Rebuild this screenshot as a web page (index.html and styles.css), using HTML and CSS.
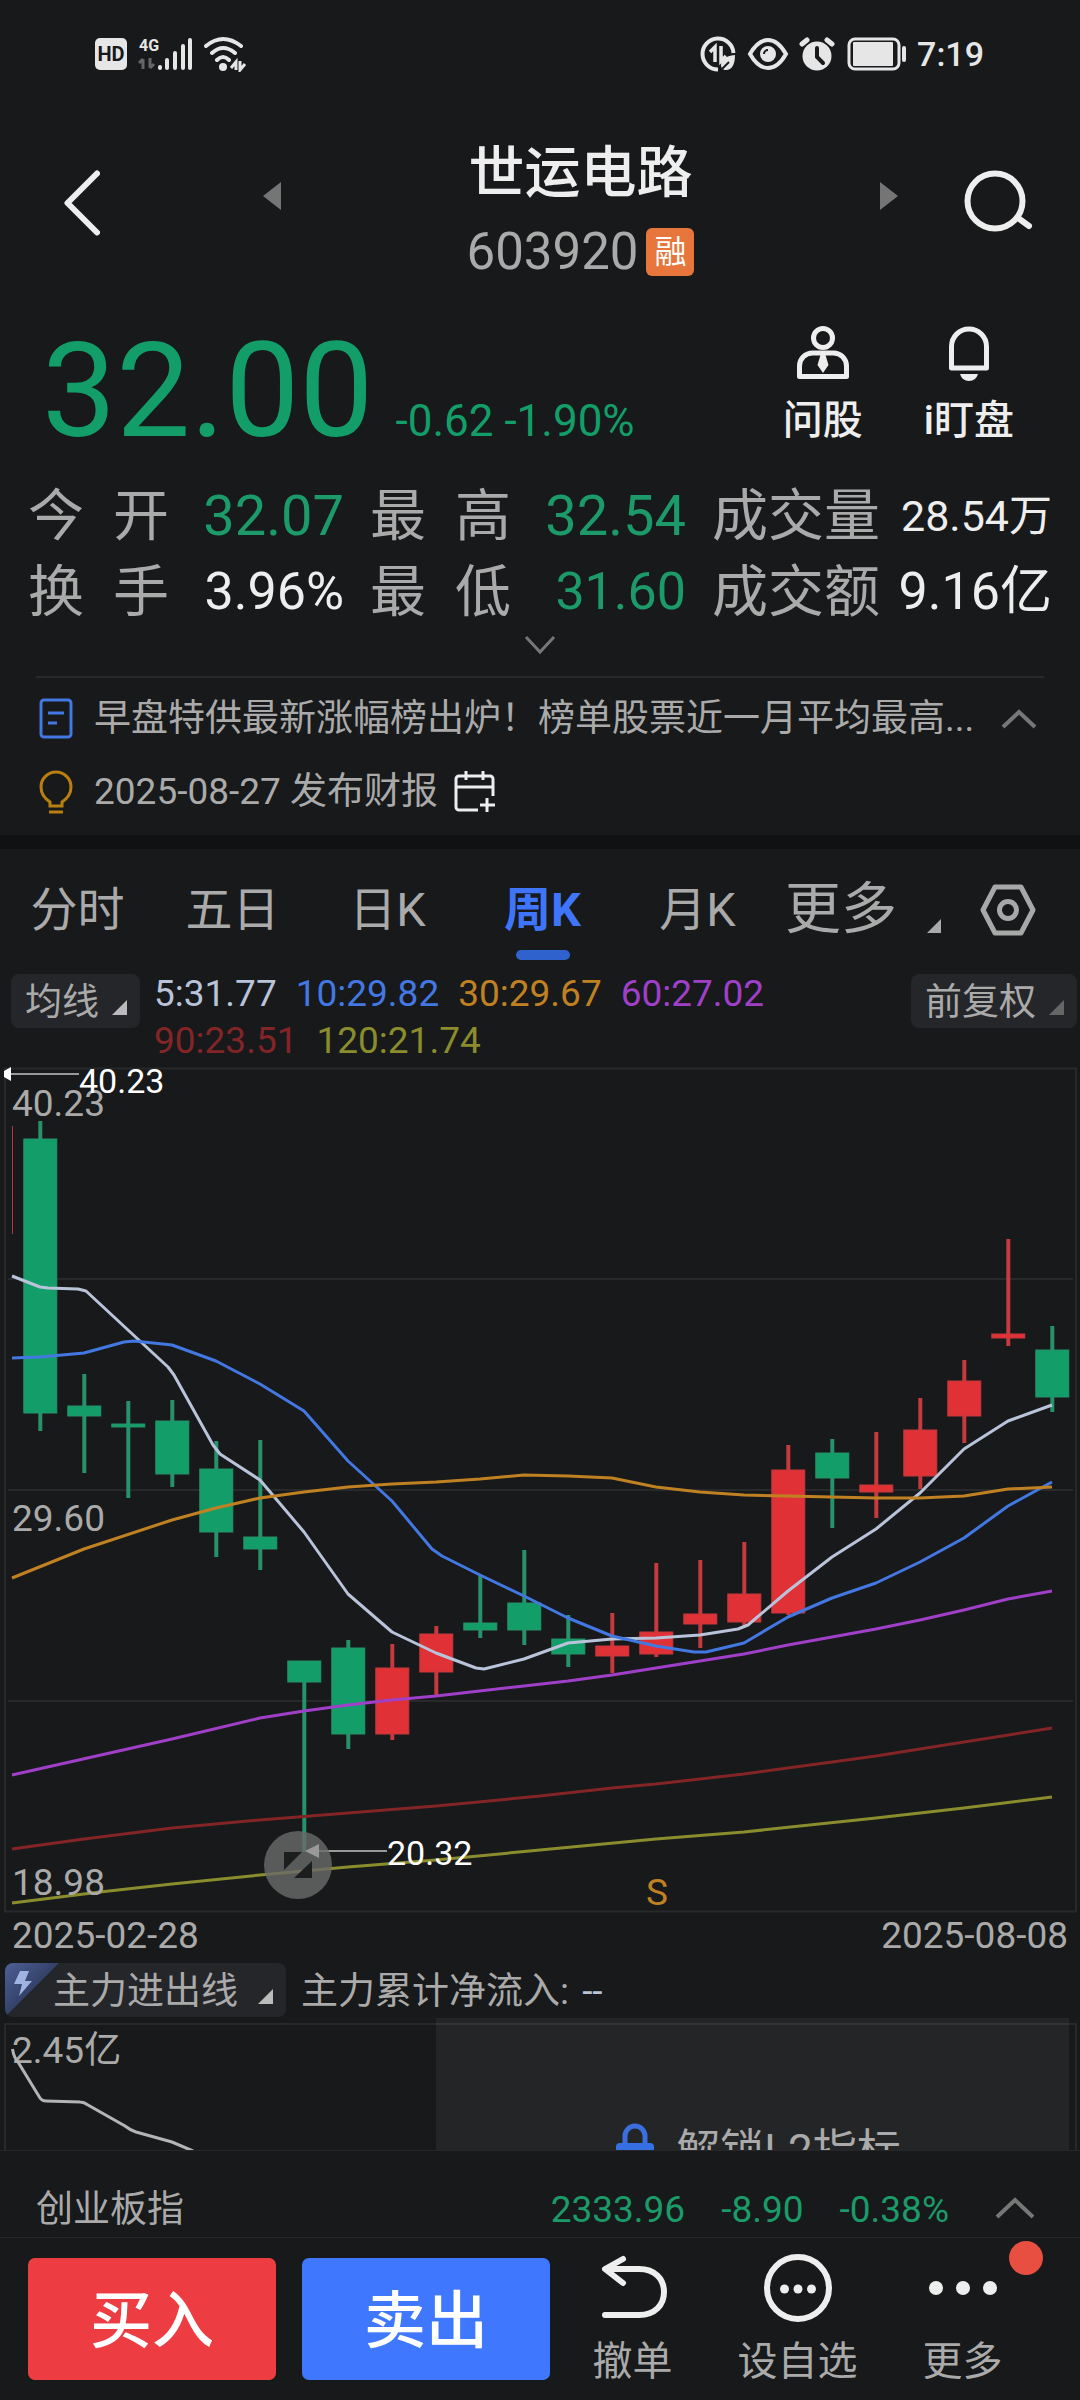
FILE: index.html
```html
<!DOCTYPE html>
<html lang="zh-CN">
<head>
<meta charset="utf-8">
<meta name="viewport" content="width=device-width, initial-scale=1">
<title>世运电路 603920</title>
<link rel="stylesheet" href="styles.css">
</head>
<body>
<div class="status">
  <div class="status-group">
    <svg width="34" height="34" viewBox="0 0 34 34"><rect x="1" y="1" width="32" height="32" rx="5" fill="#e6e6e6"/><text x="17" y="24" text-anchor="middle" class="hd">HD</text></svg>
    <svg width="56" height="36" viewBox="0 0 56 36">
      <text x="1" y="15" class="net">4G</text>
      <path d="M5 23v10M1 27l4-4M12 22v10M16 28l-4 4" stroke="#666" stroke-width="3" fill="none"/>
      <g stroke="#e6e6e6" stroke-width="4" stroke-linecap="round"><path d="M22 31v1M29 24v8M37 17v15M45 10v22M52 4v28"/></g>
    </svg>
    <svg width="44" height="36" viewBox="0 0 44 36">
      <g fill="none" stroke="#e6e6e6" stroke-width="4" stroke-linecap="round"><path d="M2 10Q19-4 37 10M8 17Q19 7 31 17M13 24Q19 18 25 24"/></g>
      <circle cx="19" cy="31" r="4" fill="#e6e6e6"/>
      <path d="M32 34V26L27 32M36 25v9l5-6" stroke="#e6e6e6" stroke-width="3" fill="none"/>
    </svg>
  </div>
  <div class="status-group">
    <svg width="38" height="38" viewBox="0 0 38 38" fill="none" stroke="#e6e6e6">
      <path d="M19 34.500A15.500 15.500 0 1 1 34.500 18" stroke-width="4"/>
      <path d="M16 27V12l-5 5M22 11v15l5-5" stroke-width="3.500"/>
      <path d="M36 20c-10 1-14 5-14 10 0 3 2 5 5 5 6 0 9-6 9-15z" fill="#e6e6e6" stroke="none"/><path d="M21 36l9-9" stroke="#17191a" stroke-width="2"/>
    </svg>
    <svg width="42" height="34" viewBox="0 0 42 34"><path d="M3 17Q11 3 21 3T39 17Q31 31 21 31T3 17z" fill="none" stroke="#e6e6e6" stroke-width="4"/><circle cx="21" cy="17" r="8" fill="#e6e6e6"/><path d="M17 17a4 4 0 0 1 4-4" fill="none" stroke="#17191a" stroke-width="2"/></svg>
    <svg width="36" height="34" viewBox="0 0 36 34"><circle cx="18" cy="19" r="14.500" fill="#e6e6e6"/><path d="M3 7l5-4M33 7l-5-4" stroke="#e6e6e6" stroke-width="5" stroke-linecap="round"/><path d="M18 11v9l6 6" fill="none" stroke="#17191a" stroke-width="4" stroke-linecap="round"/></svg>
    <svg width="62" height="34" viewBox="0 0 62 34"><rect x="4" y="2" width="50" height="30" rx="6" fill="none" stroke="#e6e6e6" stroke-width="3"/><rect x="8" y="5" width="40" height="24" rx="1" fill="#e6e6e6"/><path d="M59 11v12" stroke="#e6e6e6" stroke-width="4" stroke-linecap="round"/></svg>
    <span class="clock">7:19</span>
  </div>
</div>

<header class="head">
  <button class="icon-btn" aria-label="返回"><svg width="38" height="66" viewBox="0 0 38 66"><path d="M35 3.500L5.500 33 35 62.500" fill="none" stroke="#eee" stroke-width="6" stroke-linecap="round" stroke-linejoin="round"/></svg></button>
  <button class="icon-btn prev" aria-label="上一只"><svg width="18" height="28" viewBox="0 0 18 28"><path d="M18 0v28L0 14z" fill="#757575"/></svg></button>
  <div class="name">
    <h1>世运电路</h1>
    <p>603920<span class="tag">融</span></p>
  </div>
  <button class="icon-btn next" aria-label="下一只"><svg width="18" height="28" viewBox="0 0 18 28"><path d="M0 0v28l18-14z" fill="#757575"/></svg></button>
  <button class="icon-btn" aria-label="搜索"><svg width="70" height="64" viewBox="0 0 70 64"><circle cx="31" cy="31" r="27.500" fill="none" stroke="#eee" stroke-width="6"/><path d="M54 48l11 8" stroke="#eee" stroke-width="6" stroke-linecap="round"/></svg></button>
</header>

<section class="quote">
  <div class="price"><strong>32.00</strong><span>-0.62 -1.90%</span></div>
  <div class="quick">
    <button><svg width="54" height="56" viewBox="0 0 54 56" fill="none" stroke="#eee" stroke-width="5"><circle cx="27" cy="13" r="9.500"/><path d="M3.500 51.500V41a13 13 0 0 1 13-13h21a13 13 0 0 1 13 13v10.500z" stroke-linejoin="round"/><path d="M24.500 30h5l3 10-5.500 8-5.500-8z" fill="#eee" stroke="none"/></svg>问股</button>
    <button><svg width="54" height="56" viewBox="0 0 54 56" fill="none" stroke="#eee" stroke-width="5"><path d="M9.500 43V21.500a17.500 17.500 0 0 1 35 0V43z" stroke-linejoin="round"/><path d="M18 49h18q-2 7-9 7t-9-7z" fill="#eee" stroke="none"/></svg>i盯盘</button>
  </div>
</section>

<dl class="stats">
  <div><dt><span>今</span><span>开</span></dt><dd class="down lg">32.07</dd></div>
  <div><dt><span>最</span><span>高</span></dt><dd class="down lg">32.54</dd></div>
  <div><dt>成交量</dt><dd class="sm">28.54万</dd></div>
  <div><dt><span>换</span><span>手</span></dt><dd>3.96%</dd></div>
  <div><dt><span>最</span><span>低</span></dt><dd class="down">31.60</dd></div>
  <div><dt>成交额</dt><dd>9.16亿</dd></div>
</dl>
<button class="expand" aria-label="展开"><svg width="32" height="20" viewBox="0 0 32 20"><path d="M2 2l14 15L30 2" fill="none" stroke="#777" stroke-width="3"/></svg></button>

<section class="news">
  <a href="#news" class="news-row">
    <svg width="34" height="42" viewBox="0 0 34 42" fill="none" stroke="#4377e2" stroke-width="3"><rect x="2" y="2" width="30" height="37" rx="3"/><path d="M9 15h16M9 25h9"/></svg>
    <span class="news-text">早盘特供最新涨幅榜出炉！榜单股票近一月平均最高...</span>
    <svg width="36" height="20" viewBox="0 0 36 20"><path d="M2 18L18 3l16 15" fill="none" stroke="#777" stroke-width="4"/></svg>
  </a>
  <a href="#report" class="news-row report">
    <svg width="34" height="44" viewBox="0 0 34 44" fill="none" stroke="#b9800f" stroke-width="3"><path d="M11 36v-4C5 28 2 23 2 17a15 15 0 0 1 30 0c0 6-3 11-9 15v4zM10 42h14" /></svg>
    <span>2025-08-27 发布财报</span>
    <svg width="42" height="42" viewBox="0 0 42 42" fill="none" stroke="#eee" stroke-width="3"><path d="M39 25V8a3 3 0 0 0-3-3H5a3 3 0 0 0-3 3v28a3 3 0 0 0 3 3h19M2 16h37M12 0v9M29 0v9M33 27v14M26 34h15"/></svg>
  </a>
</section>

<nav class="tabs">
  <button>分时</button><button>五日</button><button>日K</button><button class="on">周K</button><button>月K</button>
  <button class="more">更多<svg width="14" height="14" viewBox="0 0 14 14"><path d="M14 0v14H0z" fill="#aaa"/></svg></button>
  <button class="gear" aria-label="设置"><svg width="56" height="52" viewBox="0 0 56 52" fill="none" stroke="#a8a8a8" stroke-width="5"><path d="M15 3h26l12 23-12 23H15L3 26z" stroke-linejoin="round"/><circle cx="28" cy="26" r="8.500"/></svg></button>
</nav>

<div class="ma">
  <button class="chip">均线<svg width="15" height="15" viewBox="0 0 15 15"><path d="M15 0v15H0z" fill="#bbb"/></svg></button>
  <div class="ma-list"><span class="c5">5:31.77</span><span class="c10">10:29.82</span><span class="c30">30:29.67</span><span class="c60">60:27.02</span><span class="c90">90:23.51</span><span class="c120">120:21.74</span></div>
  <button class="chip">前复权<svg width="15" height="15" viewBox="0 0 15 15"><path d="M15 0v15H0z" fill="#666"/></svg></button>
</div>

<svg class="chart" viewBox="0 1064 1080 850" role="img" aria-label="周K线图">
  <g fill="none" stroke="#28292b" stroke-width="2"><rect x="5" y="1068.500" width="1071" height="843"/><path d="M8 1279h1065M8 1490h1065M8 1701h1065"/></g>
  <path d="M12.500 1126v108" stroke="#a83a3c"/>
  <g id="candles"></g>
  <g id="averages"></g>
  <g class="scale"><text x="12" y="1116">40.23</text><text x="12" y="1531">29.60</text><text x="12" y="1895">18.98</text></g>
  <path d="M10 1074h69M318 1851h69" stroke="#999" stroke-width="2"/>
  <path d="M11 1067v14l-7-4v-6z" fill="#fff"/>
  <g class="mark"><text x="79" y="1093">40.23</text><text x="387" y="1865">20.32</text></g>
  <circle cx="298" cy="1865" r="34" fill="#6a6a6a" fill-opacity=".8"/>
  <path d="M284 1852h18l-18 18zM312 1861v17h-18z" fill="#1c1d1e"/>
  <path d="M305 1851l14-7v14z" fill="#999"/>
  <text x="646" y="1905" class="signal">S</text>
</svg>
<div class="dates"><time>2025-02-28</time><time>2025-08-08</time></div>

<div class="flow">
  <button class="chip flow-chip"><svg class="corner" width="54" height="54" viewBox="0 0 54 54"><defs><linearGradient id="cg" x1="0" y1="0" x2=".7" y2=".7"><stop offset="0" stop-color="#4d5f94"/><stop offset="1" stop-color="#2a3658"/></linearGradient></defs><path d="M0 0h54L0 54z" fill="url(#cg)"/><path d="M15 8h9l-4 10h7L14 33l3-12H9z" fill="#9fb4e0"/></svg>主力进出线<svg width="15" height="15" viewBox="0 0 15 15"><path d="M15 0v15H0z" fill="#bbb"/></svg></button>
  <span class="flow-label">主力累计净流入: <b>--</b></span>
</div>
<section class="sub">
  <svg class="sub-chart" viewBox="0 2017 1080 133" role="img" aria-label="主力进出线"><path d="M5 2150V2024h1071v126" fill="none" stroke="#28292b" stroke-width="2"/><text x="12" y="2063" class="sub-scale">2.45亿</text><path d="M12.500 2049Q14 2058 18 2062L40 2098Q42 2101 46 2101L80 2102Q84 2102 88 2105L125 2126Q130 2130 136 2132L172 2142 193 2151" fill="none" stroke="#b4b4b4" stroke-width="3"/></svg>
  <a href="#unlock" class="lock"><svg width="38" height="56" viewBox="0 0 38 56"><path d="M9 22V13a10 10 0 0 1 20 0v9" fill="none" stroke="#3b6fdf" stroke-width="5"/><rect y="20" width="38" height="30" rx="4" fill="#3670e3"/></svg>解锁L2指标</a>
</section>

<footer>
  <div class="index"><span class="index-name">创业板指</span><span>2333.96</span><span>-8.90</span><span>-0.38%</span><svg width="40" height="22" viewBox="0 0 40 22"><path d="M2 20L20 3l18 17" fill="none" stroke="#777" stroke-width="4"/></svg></div>
  <div class="actions">
    <button class="trade buy">买入</button>
    <button class="trade sell">卖出</button>
    <div class="tools">
      <button><svg width="68" height="68" viewBox="0 0 68 68" fill="none" stroke="#eee" stroke-width="6" stroke-linecap="round" stroke-linejoin="round"><path d="M6 61h34c16 0 25-10 25-23S56 15 40 15H7M24 5L6 15l18 14"/></svg>撤单</button>
      <button><svg width="68" height="68" viewBox="0 0 68 68"><circle cx="34" cy="34" r="31" fill="none" stroke="#eee" stroke-width="6"/><g fill="#eee"><circle cx="20.500" cy="35" r="4.500"/><circle cx="34" cy="35" r="4.500"/><circle cx="47.500" cy="35" r="4.500"/></g></svg>设自选</button>
      <button><svg width="68" height="68" viewBox="0 0 68 68" fill="#eee"><circle cx="7" cy="34" r="7"/><circle cx="34" cy="34" r="7"/><circle cx="61" cy="34" r="7"/></svg>更多<i class="dot"></i></button>
    </div>
  </div>
</footer>
<script src="chart.js"></script>
</body>
</html>
```
FILE: styles.css
```css
* { box-sizing: border-box; }
body {
  margin: 0;
  min-height: 100vh;
  background: #17191a;
  color: #aaa;
  font: 37px/44px Roboto, "Noto Sans CJK SC", sans-serif;
}
h1, p, dl, dd { margin: 0; }
svg { display: block; flex: none; }
button {
  font: inherit;
  color: inherit;
  background: none;
  border: 0;
  padding: 0;
  white-space: nowrap;
}
a { color: inherit; text-decoration: none; }

.status {
  display: flex;
  justify-content: space-between;
  align-items: center;
  height: 108px;
  padding: 0 96px 0 94px;
}
.status-group { display: flex; align-items: center; gap: 10px; }
.clock { font-size: 34px; font-weight: 500; color: #e6e6e6; }
.hd { font: 700 20px Roboto, sans-serif; fill: #17191a; }
.net { font: 700 16px Roboto, sans-serif; fill: #e6e6e6; }

.head {
  display: flex;
  align-items: flex-start;
  padding: 33px 46px 0 62px;
}
.icon-btn { margin-top: 29px; }
.prev, .next { margin-top: 41px; }
.prev { margin-left: 163px; }
.next { margin-right: 66px; }
.name { flex: 1; text-align: center; }
.name h1 { font-size: 56px; line-height: 64px; font-weight: 500; color: #eee; }
.name p {
  display: flex;
  justify-content: center;
  align-items: center;
  gap: 8px;
  margin-top: 21px;
  font-size: 51px;
  line-height: 52px;
}
.tag {
  width: 48px;
  height: 48px;
  border-radius: 6px;
  background: #e6763c;
  color: #fff;
  font-size: 32px;
  line-height: 48px;
  text-align: center;
}

.quote {
  display: flex;
  justify-content: space-between;
  align-items: flex-start;
  padding: 47px 66px 0 42px;
}
.price {
  display: flex;
  align-items: baseline;
  gap: 22px;
  color: #139e69;
}
.price strong { font-size: 132px; line-height: 132px; font-weight: 400; }
.price span { font-size: 44px; }
.quick { display: flex; gap: 61px; }
.quick button {
  display: flex;
  flex-direction: column;
  align-items: center;
  gap: 16px;
  font-size: 40px;
  line-height: 48px;
  font-weight: 500;
  color: #eee;
}

.stats {
  display: grid;
  grid-template-columns: 316fr 316fr 340fr;
  column-gap: 26px;
  padding: 21px 28px 0;
}
.stats div { display: flex; justify-content: space-between; }
.stats dt, .stats dd { line-height: 76px; white-space: nowrap; }
.stats dt { display: flex; gap: 29px; font-size: 56px; }
.stats dd { font-size: 52px; color: #eee; }
.stats .lg { font-size: 56px; }
.stats .sm { font-size: 43px; }
.stats .down { color: #1c9a69; }
.expand { display: block; margin: 5px auto 0; }

.news {
  margin-top: 21px;
  padding-bottom: 7px;
  border-bottom: 14px solid #101113;
}
.news::before {
  content: "";
  display: block;
  height: 2px;
  margin: 0 36px 4px;
  background: #28292b;
}
.news-row {
  display: flex;
  align-items: center;
  gap: 21px;
  height: 73px;
  padding: 0 43px 0 39px;
}
.news-text {
  flex: 1;
  overflow: hidden;
  white-space: nowrap;
  text-overflow: ellipsis;
}
.report { gap: 16px; }
.report span { margin-left: 5px; }

.tabs { display: flex; align-items: center; height: 121px; padding-right: 44px; }
.tabs button { font-size: 47px; line-height: 121px; }
.tabs button:not(.more):not(.gear) { flex: 155; position: relative; }
.tabs .on { color: #3f75fa; font-weight: 700; }
.tabs .on::after {
  content: "";
  position: absolute;
  left: 50%;
  bottom: 10px;
  width: 54px;
  height: 10px;
  margin-left: -27px;
  border-radius: 5px;
  background: #2f62cc;
}
.tabs .more {
  display: flex;
  align-items: center;
  flex: 195;
  gap: 30px;
  padding-left: 10px;
  font-size: 56px;
}
.more svg { margin-top: 32px; }

.ma { display: flex; align-items: flex-start; padding: 0 3px 0 11px; }
.chip {
  display: flex;
  align-items: center;
  gap: 13px;
  height: 54px;
  margin-top: 4px;
  padding: 4px 13px 0 14px;
  border-radius: 8px;
  background: #25262a;
}
.chip > svg:last-child { margin-top: 8px; }
.ma-list {
  flex: 1;
  display: flex;
  flex-wrap: wrap;
  column-gap: 19px;
  padding: 0 100px 0 14px;
  line-height: 47px;
}
.c5 { color: #b9c4da; }
.c10 { color: #4377e2; }
.c30 { color: #c08122; }
.c60 { color: #a03fc8; }
.c90 { color: #832527; }
.c120 { color: #8b8c2d; }

.chart { width: 100%; }
.chart text { font-size: 37px; fill: #aaa; }
.chart .mark text { font-size: 34px; fill: #fff; }
.chart .signal { fill: #c08122; }
.ma-line { fill: none; stroke-width: 3; stroke-linejoin: round; }
.wick { stroke-width: 4; }
.up-body { fill: #df3136; stroke: #c43a3d; }
.down-body { fill: #139e69; stroke: #27926a; }
.dates { display: flex; justify-content: space-between; padding: 0 12px; }

.flow { display: flex; align-items: center; gap: 15px; padding: 5px; }
.flow-chip {
  position: relative;
  margin: 0;
  padding-left: 48px;
  gap: 20px;
  overflow: hidden;
}
.corner { position: absolute; left: 0; top: 0; }
.flow-label { padding-top: 4px; }
.flow b { margin-left: 4px; color: #b9c4da; font-weight: 400; }

.sub { position: relative; margin-top: -5px; overflow: hidden; }
.sub-chart { width: 100%; }
.sub-scale { font-size: 37px; fill: #aaa; }
.lock {
  position: absolute;
  left: 436px;
  right: 11px;
  top: 1px;
  height: 266px;
  display: flex;
  justify-content: center;
  align-items: center;
  gap: 22px;
  padding-left: 12px;
  background: rgba(255, 255, 255, 0.055);
  font-size: 44px;
}

.index {
  display: flex;
  align-items: center;
  gap: 36px;
  height: 88px;
  padding: 31px 45px 0 36px;
  border: solid #26272a;
  border-width: 1px 0;
  color: #1c9a69;
}
.index-name { margin-right: auto; color: #aaa; }
.index svg { margin: 0 0 4px 10px; }
.actions { display: flex; padding: 20px 35px 20px 28px; }
.trade {
  flex: 248;
  height: 122px;
  padding-top: 6px;
  border-radius: 7px;
  color: #fff;
  font-size: 62px;
  font-weight: 500;
}
.buy { background: #ed3d42; }
.sell { background: #3f78ff; margin-left: 26px; }
.tools { flex: 495; display: flex; }
.tools button {
  position: relative;
  flex: 1;
  display: flex;
  flex-direction: column;
  align-items: center;
  gap: 18px;
  margin-top: -4px;
  font-size: 40px;
}
.dot {
  position: absolute;
  left: 50%;
  top: -13px;
  width: 34px;
  height: 34px;
  margin-left: 46px;
  border-radius: 50%;
  background: #e84f40;
}
```
FILE: chart.js
```js
const NS = 'http://www.w3.org/2000/svg';
const FIRST = 40.3, STEP = 44, BODY = 33;

// direction, high, body top, body bottom, low
const candles = [
  ['down', 1121, 1139, 1413, 1431], ['down', 1374, 1406, 1416, 1473],
  ['down', 1401, 1424, 1427, 1498], ['down', 1400, 1421, 1474, 1487],
  ['down', 1441, 1469, 1532, 1557], ['down', 1440, 1537, 1549, 1570],
  ['down', 1661, 1661, 1682, 1852], ['down', 1640, 1648, 1734, 1749],
  ['up', 1644, 1668, 1734, 1740], ['up', 1626, 1634, 1672, 1697],
  ['down', 1575, 1623, 1630, 1638], ['down', 1550, 1603, 1630, 1645],
  ['down', 1615, 1639, 1654, 1667], ['up', 1613, 1646, 1656, 1673],
  ['up', 1563, 1632, 1654, 1657], ['up', 1560, 1614, 1624, 1648],
  ['up', 1542, 1594, 1622, 1626], ['up', 1445, 1470, 1613, 1615],
  ['down', 1439, 1453, 1478, 1528], ['up', 1432, 1485, 1492, 1518],
  ['up', 1398, 1430, 1476, 1489], ['up', 1360, 1381, 1416, 1443],
  ['up', 1239, 1334, 1338, 1346], ['down', 1326, 1350, 1397, 1412]
];

const averages = {
  '#b9c4da': '12,1276 40,1287 48,1288 78,1289 86,1291 128,1330 168,1367 174,1375 213,1445 220,1454 260,1480 304,1532 348,1594 392,1632 436,1653 476,1668 484,1669 524,1659 568,1643 612,1639 656,1638 700,1635 738,1629 748,1625 788,1591 832,1557 876,1529 920,1493 964,1449 1008,1421 1052,1405',
  '#4377e2': '12,1358 40,1357 84,1353 124,1342 134,1341 172,1345 216,1361 260,1384 304,1411 348,1461 392,1501 432,1549 442,1556 480,1575 524,1596 568,1618 612,1636 656,1646 694,1652 706,1652 744,1643 788,1617 832,1598 876,1583 920,1562 964,1538 1008,1506 1052,1482',
  '#c08122': '12,1578 84,1549 172,1520 216,1508 260,1498 304,1492 348,1487 392,1484 436,1482 480,1479 524,1475 568,1476 612,1478 656,1487 700,1492 744,1495 788,1496 832,1497 876,1498 920,1498 964,1496 1008,1489 1052,1487',
  '#a03fc8': '12,1775 172,1739 260,1718 304,1711 348,1705 392,1700 436,1696 524,1686 568,1681 612,1675 656,1668 700,1661 744,1654 788,1645 832,1637 876,1629 920,1620 964,1610 1008,1599 1052,1591',
  '#832527': '12,1849 84,1839 172,1828 260,1820 348,1813 436,1806 540,1796 612,1788 656,1784 744,1774 832,1762 876,1756 964,1742 1052,1728',
  '#8b8c2d': '12,1903 100,1892 172,1884 260,1875 348,1867 436,1860 540,1850 656,1839 744,1832 876,1818 964,1808 1052,1797'
};

function add(parent, name, attrs) {
  const el = document.createElementNS(NS, name);
  for (const key in attrs) el.setAttribute(key, attrs[key]);
  parent.appendChild(el);
}

const candleLayer = document.getElementById('candles');
candles.forEach(([dir, high, top, bottom, low], i) => {
  const x = FIRST + i * STEP;
  add(candleLayer, 'line', { class: 'wick', x1: x, x2: x, y1: high, y2: low, stroke: dir === 'up' ? '#c43a3d' : '#27926a' });
  add(candleLayer, 'rect', { class: dir + '-body', x: x - BODY / 2, y: top, width: BODY, height: bottom - top });
});

const lineLayer = document.getElementById('averages');
for (const color in averages) {
  add(lineLayer, 'polyline', { class: 'ma-line', points: averages[color], stroke: color });
}
```
